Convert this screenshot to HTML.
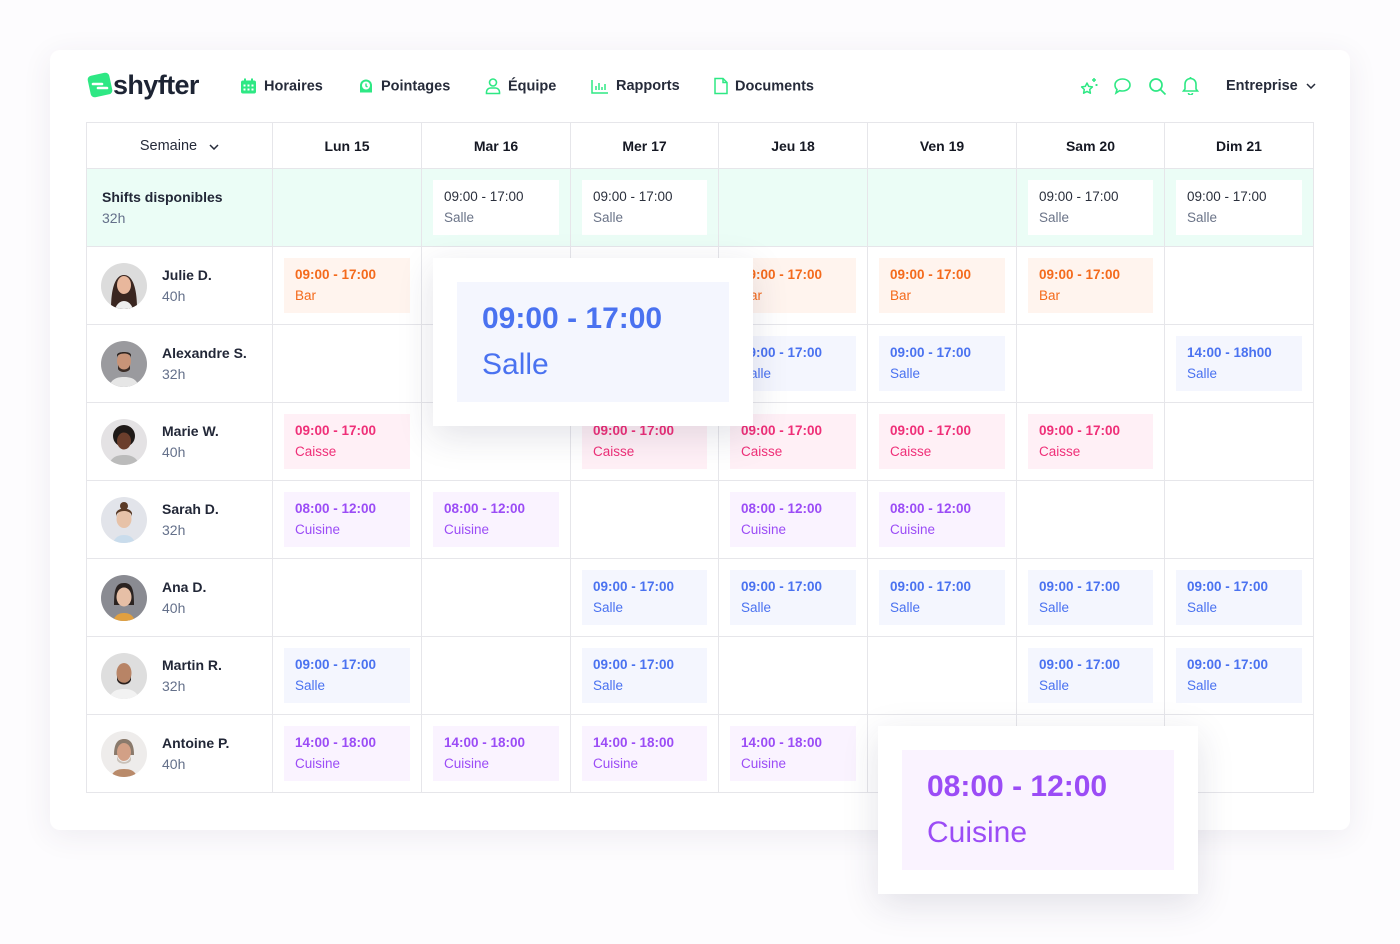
<!DOCTYPE html>
<html><head><meta charset="utf-8"><style>
*{box-sizing:border-box;margin:0;padding:0}
body{width:1400px;height:944px;background:#fdfcfe;font-family:"Liberation Sans",Arial,sans-serif;position:relative;overflow:hidden;color:#1f2433}
.card{position:absolute;left:50px;top:50px;width:1300px;height:780px;background:#fff;border-radius:10px;box-shadow:0 6px 30px rgba(60,50,90,.08)}
.nav{position:absolute;top:86px;font-size:14.5px;font-weight:bold;color:#262b3a;transform:translateY(-50%);display:flex;align-items:center}
.nav svg{margin-right:7px}
table{position:absolute;left:86px;top:122px;border-collapse:collapse;table-layout:fixed}
td{border:1px solid #e6e6ea;height:78px;position:relative;padding:0}
tr.h td{height:46px;text-align:center;font-weight:bold;font-size:14px;color:#151823}
tr.s td{background:#ebfdf6}
.b{position:absolute;left:11px;right:11px;top:11px;bottom:11px;padding:6px 0 0 11px;font-size:13.5px;line-height:21px}
.b b{display:block}
.o{background:#fff4ee;color:#f46a1c}.bl{background:#f4f6fe;color:#4a72f0}.p{background:#fff0f6;color:#ef2f78}.pu{background:#faf3ff;color:#9b4cf6}
.w{background:#fff;color:#2a2f3c}.w span{color:#6b7488}
.emp{padding-left:75px;font-size:14px;line-height:21px}
.emp b{display:block;color:#222737}.emp span{color:#64708a}
.av{position:absolute;left:14px;top:16px;width:46px;height:46px;border-radius:50%;overflow:hidden}
.pop{position:absolute;background:#fff;box-shadow:0 10px 34px rgba(40,40,80,.13)}
.pop .in{position:absolute;left:24px;top:24px;width:272px;height:120px;padding:14px 0 0 25px;font-size:30px;line-height:46px}
.pop b{display:block}
</style></head><body>
<div class="card"></div>

<div style="position:absolute;left:86px;top:72px;display:flex;align-items:center">
<svg width="28" height="26" viewBox="0 0 28 26"><rect x="3" y="2" width="22" height="22" rx="4" transform="rotate(-12 14 13)" fill="#2ee884"/><path d="M7 12h9M12 16h9" stroke="#fff" stroke-width="2.6" stroke-linecap="round"/></svg>
<span style="font-size:27px;font-weight:bold;color:#1d2434;letter-spacing:-0.6px;margin-left:-1px;line-height:26px">shyfter</span>
</div>

<div class="nav" style="left:240px"><svg width="17" height="17" viewBox="0 0 17 17"><rect x="1" y="3" width="15" height="13" rx="2" fill="#2ee884"/><path d="M5 1v4M12 1v4" stroke="#2ee884" stroke-width="2"/><g fill="#fff"><rect x="3.5" y="7" width="2" height="2"/><rect x="7.5" y="7" width="2" height="2"/><rect x="11.5" y="7" width="2" height="2"/><rect x="3.5" y="11" width="2" height="2"/><rect x="7.5" y="11" width="2" height="2"/><rect x="11.5" y="11" width="2" height="2"/></g></svg>Horaires</div>
<div class="nav" style="left:358px"><svg width="16" height="17" viewBox="0 0 16 17"><path d="M2 15V8a6 6 0 1 1 12 0v7z" fill="#2ee884"/><circle cx="8" cy="8" r="4" fill="#fff"/><path d="M8 6v2.5l1.5 1" stroke="#2ee884" stroke-width="1.4" fill="none"/></svg>Pointages</div>
<div class="nav" style="left:485px"><svg width="16" height="17" viewBox="0 0 16 17" fill="none" stroke="#2ee884" stroke-width="1.6"><circle cx="8" cy="5" r="3.5"/><path d="M1.5 16v-1.5a4 4 0 0 1 4-4h5a4 4 0 0 1 4 4V16z"/></svg>Équipe</div>
<div class="nav" style="left:591px"><svg width="18" height="15" viewBox="0 0 18 15" stroke="#2ee884" stroke-width="1.5" fill="none"><path d="M1 1v13h16"/><path d="M5 11V7M8 11V4M11 11V8M14 11V5"/></svg>Rapports</div>
<div class="nav" style="left:714px"><svg width="14" height="17" viewBox="0 0 14 17" fill="none" stroke="#2ee884" stroke-width="1.5"><path d="M1 1h8l4 4v11H1z"/><path d="M9 1v4h4"/></svg>Documents</div>

<svg style="position:absolute;left:1079px;top:77px" width="20" height="18" viewBox="0 0 20 18" fill="none" stroke="#2ee884" stroke-width="1.5" stroke-linejoin="round"><path d="M8 6l1.7 3.4 3.7.5-2.7 2.6.7 3.7L8 14.4l-3.4 1.8.7-3.7L2.6 9.9l3.7-.5z"/><path d="M15 1v4M13 3h4M17.5 7v2M16.5 8h2"/></svg>
<svg style="position:absolute;left:1113px;top:77px" width="19" height="18" viewBox="0 0 19 18" fill="none" stroke="#2ee884" stroke-width="1.6"><path d="M9.5 2c4.4 0 7.5 2.6 7.5 6s-3.1 6-7.5 6c-1 0-2-.1-2.8-.4L3 16l1-3.5C2.7 11.4 2 9.8 2 8c0-3.4 3.1-6 7.5-6z"/></svg>
<svg style="position:absolute;left:1148px;top:77px" width="19" height="19" viewBox="0 0 19 19" fill="none" stroke="#2ee884" stroke-width="1.7"><circle cx="8" cy="8" r="6"/><path d="M12.5 12.5L17.5 17.5"/></svg>
<svg style="position:absolute;left:1182px;top:76px" width="17" height="19" viewBox="0 0 17 19" fill="none" stroke="#2ee884" stroke-width="1.6"><path d="M3 13V8a5.5 5.5 0 0 1 11 0v5l1.5 2h-14z"/><path d="M8.5 1v1.5M6.5 17a2 2 0 0 0 4 0"/></svg>
<div class="nav" style="left:1226px;color:#262b3a">Entreprise<svg style="margin-left:8px;margin-right:0" width="10" height="6" viewBox="0 0 10 6" fill="none" stroke="#262b3a" stroke-width="1.5"><path d="M1 1l4 4 4-4"/></svg></div>

<table>
<colgroup><col style="width:186px"><col style="width:149px"><col style="width:149px"><col style="width:148px"><col style="width:149px"><col style="width:149px"><col style="width:148px"><col style="width:149px"></colgroup>
<tr class="h"><td style="font-weight:normal;color:#262b3a;font-size:14.5px">Semaine <svg style="margin-left:8px" width="10" height="6" viewBox="0 0 10 6" fill="none" stroke="#262b3a" stroke-width="1.5"><path d="M1 1l4 4 4-4"/></svg></td><td>Lun 15</td><td>Mar 16</td><td>Mer 17</td><td>Jeu 18</td><td>Ven 19</td><td>Sam 20</td><td>Dim 21</td></tr>
<tr class="s"><td style="padding-left:15px;font-size:14px;line-height:21px"><b style="display:block;color:#222737">Shifts disponibles</b><span style="color:#64708a">32h</span></td><td></td>
<td><div class="b w">09:00 - 17:00<br><span>Salle</span></div></td>
<td><div class="b w">09:00 - 17:00<br><span>Salle</span></div></td><td></td><td></td>
<td><div class="b w">09:00 - 17:00<br><span>Salle</span></div></td>
<td><div class="b w">09:00 - 17:00<br><span>Salle</span></div></td></tr>

<tr><td class="emp"><svg class="av" viewBox="0 0 46 46"><rect width="46" height="46" fill="#dcdcdc"/><path d="M10 46c0-20 4-34 13-34s13 14 13 34z" fill="#3a2620"/><ellipse cx="23" cy="22" rx="7" ry="9" fill="#e8b79c"/><path d="M14 46c2-6 6-8 9-8s7 2 9 8z" fill="#eee"/></svg><b>Julie D.</b><span>40h</span></td>
<td><div class="b o"><b>09:00 - 17:00</b>Bar</div></td><td></td><td></td>
<td><div class="b o"><b>09:00 - 17:00</b>Bar</div></td>
<td><div class="b o"><b>09:00 - 17:00</b>Bar</div></td>
<td><div class="b o"><b>09:00 - 17:00</b>Bar</div></td><td></td></tr>

<tr><td class="emp"><svg class="av" viewBox="0 0 46 46"><rect width="46" height="46" fill="#9a9a9e"/><ellipse cx="23" cy="20" rx="7" ry="9" fill="#c89478"/><path d="M16 17c0-6 14-6 14 0v-3c0-4-14-4-14 0z" fill="#2c2420"/><path d="M17 24c2 6 10 6 12 0v4c-2 4-10 4-12 0z" fill="#3a2c26"/><path d="M8 46c2-8 8-10 15-10s13 2 15 10z" fill="#e6e6e6"/></svg><b>Alexandre S.</b><span>32h</span></td>
<td></td><td></td><td></td>
<td><div class="b bl"><b>09:00 - 17:00</b>Salle</div></td>
<td><div class="b bl"><b>09:00 - 17:00</b>Salle</div></td><td></td>
<td><div class="b bl"><b>14:00 - 18h00</b>Salle</div></td></tr>

<tr><td class="emp"><svg class="av" viewBox="0 0 46 46"><rect width="46" height="46" fill="#e4e2e4"/><circle cx="23" cy="17" r="11" fill="#1f1a18"/><ellipse cx="23" cy="22" rx="7" ry="8.5" fill="#6b3e2c"/><path d="M8 46c2-8 8-10 15-10s13 2 15 10z" fill="#bbb"/></svg><b>Marie W.</b><span>40h</span></td>
<td><div class="b p"><b>09:00 - 17:00</b>Caisse</div></td><td></td>
<td><div class="b p"><b>09:00 - 17:00</b>Caisse</div></td>
<td><div class="b p"><b>09:00 - 17:00</b>Caisse</div></td>
<td><div class="b p"><b>09:00 - 17:00</b>Caisse</div></td>
<td><div class="b p"><b>09:00 - 17:00</b>Caisse</div></td><td></td></tr>

<tr><td class="emp"><svg class="av" viewBox="0 0 46 46"><rect width="46" height="46" fill="#e2e4ea"/><circle cx="23" cy="9" r="4" fill="#5a3a26"/><ellipse cx="23" cy="22" rx="7.5" ry="9" fill="#e7c2a8"/><path d="M15 20c0-8 16-8 16 0v-4c-2-6-14-6-16 0z" fill="#5a3a26"/><path d="M12 46c2-6 6-8 11-8s9 2 11 8z" fill="#c9dcec"/></svg><b>Sarah D.</b><span>32h</span></td>
<td><div class="b pu"><b>08:00 - 12:00</b>Cuisine</div></td>
<td><div class="b pu"><b>08:00 - 12:00</b>Cuisine</div></td><td></td>
<td><div class="b pu"><b>08:00 - 12:00</b>Cuisine</div></td>
<td><div class="b pu"><b>08:00 - 12:00</b>Cuisine</div></td><td></td><td></td></tr>

<tr><td class="emp"><svg class="av" viewBox="0 0 46 46"><rect width="46" height="46" fill="#8a8b92"/><path d="M13 30c0-16 2-22 10-22s10 6 10 22z" fill="#2a2220"/><ellipse cx="23" cy="22" rx="7.5" ry="9.5" fill="#e6bfa6"/><path d="M12 46c2-6 6-8 11-8s9 2 11 8z" fill="#e1a040"/></svg><b>Ana D.</b><span>40h</span></td>
<td></td><td></td>
<td><div class="b bl"><b>09:00 - 17:00</b>Salle</div></td>
<td><div class="b bl"><b>09:00 - 17:00</b>Salle</div></td>
<td><div class="b bl"><b>09:00 - 17:00</b>Salle</div></td>
<td><div class="b bl"><b>09:00 - 17:00</b>Salle</div></td>
<td><div class="b bl"><b>09:00 - 17:00</b>Salle</div></td></tr>

<tr><td class="emp"><svg class="av" viewBox="0 0 46 46"><rect width="46" height="46" fill="#dedede"/><ellipse cx="23" cy="20" rx="7.5" ry="10" fill="#b88466"/><path d="M16 23c1 9 13 9 14 0v4c-2 6-12 6-14 0z" fill="#2a201c"/><path d="M8 46c2-8 8-10 15-10s13 2 15 10z" fill="#f2f2f2"/></svg><b>Martin R.</b><span>32h</span></td>
<td><div class="b bl"><b>09:00 - 17:00</b>Salle</div></td><td></td>
<td><div class="b bl"><b>09:00 - 17:00</b>Salle</div></td><td></td><td></td>
<td><div class="b bl"><b>09:00 - 17:00</b>Salle</div></td>
<td><div class="b bl"><b>09:00 - 17:00</b>Salle</div></td></tr>

<tr><td class="emp"><svg class="av" viewBox="0 0 46 46"><rect width="46" height="46" fill="#eeeceb"/><path d="M13 24c0-12 4-16 10-16s10 4 10 16z" fill="#8a7a6c"/><ellipse cx="23" cy="21" rx="7" ry="9" fill="#d2a086"/><path d="M16 25c2 8 12 8 14 0v4c-2 5-12 5-14 0z" fill="#c8c0b8"/><path d="M10 46c2-6 6-8 13-8s11 2 13 8z" fill="#b98a6a"/></svg><b>Antoine P.</b><span>40h</span></td>
<td><div class="b pu"><b>14:00 - 18:00</b>Cuisine</div></td>
<td><div class="b pu"><b>14:00 - 18:00</b>Cuisine</div></td>
<td><div class="b pu"><b>14:00 - 18:00</b>Cuisine</div></td>
<td><div class="b pu"><b>14:00 - 18:00</b>Cuisine</div></td><td></td><td></td><td></td></tr>
</table>

<div class="pop" style="left:433px;top:258px;width:320px;height:168px"><div class="in bl"><b>09:00 - 17:00</b>Salle</div></div>
<div class="pop" style="left:878px;top:726px;width:320px;height:168px"><div class="in pu"><b>08:00 - 12:00</b>Cuisine</div></div>
</body></html>
